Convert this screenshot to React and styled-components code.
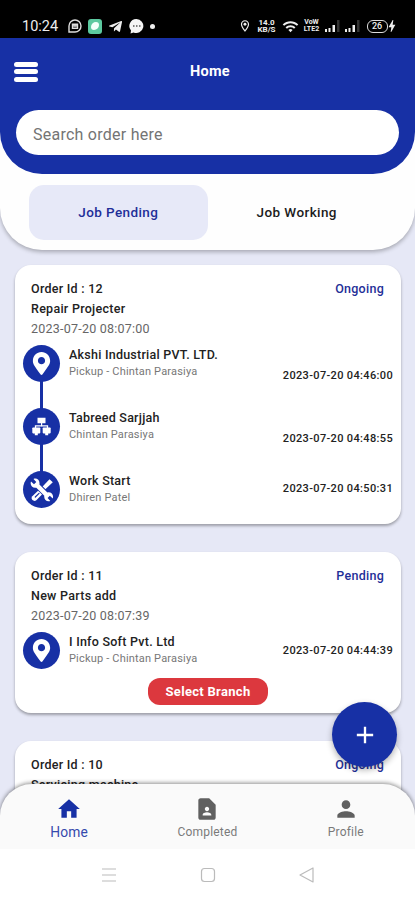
import styled, { createGlobalStyle } from 'styled-components'
import {
 MdHome,
 MdPerson,
 MdAdd,
 MdContactPage,
 MdBolt,
 MdWifi,
 MdOutlineLocationOn,
} from 'react-icons/md'
import { FaMapMarkerAlt, FaTelegramPlane } from 'react-icons/fa'

const GlobalStyle = createGlobalStyle`
 * {
  box-sizing: border-box;
 }
 body {
  margin: 0;
  font-family: Roboto, 'Liberation Sans', sans-serif;
  background: #e6e8f6;
 }
`
const Screen = styled.div`
 height: 900px;
 display: flex;
 flex-direction: column;
 overflow: hidden;
 background: #e6e8f6;
`
const StatusBar = styled.div`
 height: 38px;
 flex-shrink: 0;
 padding: 14px 20px 0 22px;
 display: flex;
 justify-content: space-between;
 background: #000;
 color: #eee;
 svg {
  display: block;
  flex-shrink: 0;
 }
`
const StatusGroup = styled.div`
 height: 24px;
 display: flex;
 align-items: center;
 gap: ${({ $gap }) => $gap}px;
`
const Clock = styled.span`
 width: 37px;
 margin-right: 3px;
 font-size: 14.5px;
 white-space: nowrap;
`
const GreenApp = styled.span`
 width: 14px;
 height: 15px;
 padding: 3px;
 border-radius: 3px;
 background: #5cc9a0;
 &::before {
  content: '';
  display: block;
  width: 8px;
  height: 8px;
  border-radius: 5px 3px;
  background: #f2fffa;
 }
`
const Dot = styled.span`
 width: 5px;
 height: 5px;
 border-radius: 50%;
 background: #eee;
`
const Tiny = styled.span`
 width: ${({ $width }) => $width}px;
 display: flex;
 flex-direction: column;
 align-items: center;
 gap: 0.5px;
 font-size: ${({ $size }) => $size}px;
 font-weight: 700;
 line-height: 7px;
 white-space: nowrap;
 span {
  display: block;
  height: 7px;
 }
`
const Battery = styled.span`
 width: 21px;
 height: 13px;
 margin-left: 1px;
 border: 1.5px solid #ddd;
 border-radius: 6px;
 font-size: 9px;
 font-weight: 500;
 line-height: 11px;
 text-align: center;
`
const Bolt = styled(MdBolt)`
 margin: 0 -5px 0 -9px;
`
const Top = styled.div`
 flex-shrink: 0;
 border-radius: 0 0 42px 42px;
 background: #fefefe;
 box-shadow: 0 2px 4px rgba(0, 0, 0, 0.28);
`
const Header = styled.header`
 height: 136px;
 padding: 0 16px;
 border-radius: 0 0 42px 42px;
 background: #1730a5;
`
const TitleRow = styled.div`
 height: 72px;
 display: grid;
 grid-template-columns: 60px 1fr 56px;
 align-items: center;
 margin-left: -2px;
 color: #fff;
`
const Burger = styled.div`
 width: 24px;
 display: flex;
 flex-direction: column;
 gap: 2.5px;
 margin-top: -5px;
`
const BurgerLine = styled.span`
 height: 5px;
 border-radius: 2.5px;
 background: #fff;
`
const Title = styled.h1`
 margin: -6px 0 0;
 padding-left: 3px;
 font-size: 14.5px;
 font-weight: 700;
 text-align: center;
 letter-spacing: 0.25px;
`
const Search = styled.input`
 display: block;
 width: 100%;
 height: 45px;
 padding: 3px 17px 0;
 border: 0;
 border-radius: 23px;
 outline: 0;
 background: #fff;
 font-family: inherit;
 font-size: 16px;
 letter-spacing: 0.25px;
 &::placeholder {
  color: #747474;
  opacity: 1;
 }
`
const Tabs = styled.div`
 height: 76px;
 padding: 11px 29px 10px;
 display: flex;
`
const Tab = styled.div`
 flex: 1;
 border-radius: 15px;
 background: ${({ $active }) => ($active ? '#e7e9f8' : 'transparent')};
 color: ${({ $active }) => ($active ? '#1f2f98' : '#1c1c1c')};
 font-size: 13.5px;
 font-weight: 500;
 letter-spacing: 0.4px;
 line-height: 54px;
 text-align: center;
`
const List = styled.main`
 flex: 1;
 min-height: 0;
 overflow: hidden;
 margin-bottom: -36px;
 padding: 15px 14px 0 15px;
 display: flex;
 flex-direction: column;
 gap: 28px;
`
const Card = styled.article`
 height: ${({ $height }) => $height}px;
 flex-shrink: 0;
 padding: 14px 8px 0 8px;
 border-radius: 16px;
 background: #fff;
 box-shadow: 0 2px 3px rgba(0, 0, 0, 0.32);
`
const CardHead = styled.div`
 display: flex;
 justify-content: space-between;
 padding: 0 9px 0 8px;
`
const Strong = styled.div`
 color: ${({ $blue }) => ($blue ? '#1f2f98' : '#222')};
 font-size: 12.5px;
 font-weight: 500;
 line-height: 20px;
 letter-spacing: 0.27px;
 white-space: nowrap;
`
const Created = styled.div`
 color: #666;
 font-size: 12.5px;
 line-height: 20px;
 letter-spacing: 0.23px;
`
const Steps = styled.div`
 display: flex;
 flex-direction: column;
 gap: 26px;
 margin-top: 6px;
`
const Step = styled.div`
 height: 37px;
 display: grid;
 grid-template-columns: 37px 1fr auto;
 column-gap: 9px;
`
const StepIcon = styled.div`
 position: relative;
 width: 37px;
 height: 37px;
 display: flex;
 align-items: center;
 justify-content: center;
 border-radius: 50%;
 background: #1730a5;
 color: #fff;
 &::after {
  content: '';
  display: ${({ $linked }) => ($linked ? 'block' : 'none')};
  position: absolute;
  top: 36px;
  left: 17px;
  width: 3px;
  height: 28px;
  background: #1730a5;
 }
`
const StepText = styled.div`
 padding-top: 1px;
`
const StepName = styled.div`
 color: #222;
 font-size: 12.5px;
 font-weight: 500;
 line-height: 18px;
 letter-spacing: 0.24px;
 white-space: nowrap;
`
const StepPerson = styled.div`
 color: #777;
 font-size: 11px;
 line-height: 15px;
 letter-spacing: 0.18px;
`
const StepTime = styled.div`
 padding-top: ${({ $offset }) => $offset}px;
 color: #222;
 font-size: 11px;
 font-weight: 500;
 line-height: 14px;
 letter-spacing: 0.35px;
`
const BranchButton = styled.button`
 display: block;
 width: 120px;
 height: 27px;
 margin: 9px auto 0;
 padding: 0;
 border: 0;
 border-radius: 12px;
 background: #dc383e;
 color: #fff;
 font-family: inherit;
 font-size: 13px;
 font-weight: 700;
 letter-spacing: 0.3px;
`
const Fab = styled.button`
 position: absolute;
 top: 702px;
 left: 332px;
 width: 65px;
 height: 65px;
 display: flex;
 align-items: center;
 justify-content: center;
 padding: 0;
 border: 0;
 border-radius: 50%;
 background: #1730a5;
 color: #fff;
 box-shadow: 0 3px 6px rgba(0, 0, 0, 0.3);
`
const BottomNav = styled.nav`
 position: relative;
 height: 65px;
 flex-shrink: 0;
 display: grid;
 grid-template-columns: repeat(3, 1fr);
 border-radius: 32px 32px 0 0;
 background: #fafafa;
 box-shadow: 0 -1px 4px rgba(0, 0, 0, 0.45);
`
const NavItem = styled.div`
 display: flex;
 flex-direction: column;
 align-items: center;
 padding-top: 12px;
 color: ${({ $active }) => ($active ? '#1730a5' : '#606060')};
 font-size: ${({ $active }) => ($active ? 13.8 : 12)}px;
 letter-spacing: 0.2px;
 line-height: 20px;
`
const NavLabel = styled.span`
 color: ${({ $active }) => ($active ? '#3549ad' : '#7a7a7a')};
`
const SystemNav = styled.div`
 position: relative;
 height: 51px;
 flex-shrink: 0;
 background: #fff;
 svg {
  display: block;
 }
`

function NetworkIcon({ size }) {
 return (
  <svg width={size} height={size} viewBox="0 0 19 19" fill="currentColor">
   <path d="M5.500 .8h8v5.500h-8zM9 6h1.200v3.300H9z" />
   <path d="M3.500 11V8.800h12V11" fill="none" stroke="currentColor" strokeWidth="1.3" />
   <rect x=".3" y="10.400" width="8" height="6" rx=".8" />
   <rect x="10.700" y="10.400" width="8" height="6" rx=".8" />
   <path d="M2.800 16h3v2.300h-3zM13.200 16h3v2.300h-3z" />
  </svg>
 )
}

function ToolsIcon({ size }) {
 return (
  <svg width={size} height={size} viewBox="0 0 24 24" fill="currentColor">
   <path d="M13.800 7.200 19.500 1.200l3.300 3.100-6.100 5.600-2.600 2.500-2.600-2.600z" />
   <path d="M8.600 12.200 12.500 16l-6.200 6.300c-2.600 2.100-6.300-1.300-4-4z" />
   <path d="m5.300 19 3.700-3.600" stroke="#1730a5" strokeWidth="1.200" strokeLinecap="round" />
   <g stroke="#1730a5" strokeWidth="1.800" strokeLinejoin="round" paintOrder="stroke">
    <path d="M3.500 .9 6.300 3.900 4 6.200 1 3.400C-.4 7 2.400 10.400 6.300 9.700l8 8c-.7 4 2.600 6.500 6 5.300l-2.700-3 2.200-2.300 3 2.700c1.200-3.700-1.600-6.700-5.400-6L9.400 6.400C10.200 2.400 7 -.4 3.500 .9z" />
   </g>
  </svg>
 )
}

const orders = [
 {
  id: 12,
  title: 'Repair Projecter',
  created: '2023-07-20 08:07:00',
  status: 'Ongoing',
  height: 259,
  steps: [
   { icon: FaMapMarkerAlt, size: 23, name: 'Akshi Industrial PVT. LTD.', person: 'Pickup - Chintan Parasiya', time: '2023-07-20 04:46:00', offset: 24 },
   { icon: NetworkIcon, size: 19, name: 'Tabreed Sarjjah', person: 'Chintan Parasiya', time: '2023-07-20 04:48:55', offset: 24 },
   { icon: ToolsIcon, size: 24, name: 'Work Start', person: 'Dhiren Patel', time: '2023-07-20 04:50:31', offset: 11 },
  ],
 },
 {
  id: 11,
  title: 'New Parts add',
  created: '2023-07-20 08:07:39',
  status: 'Pending',
  height: 161,
  action: 'Select Branch',
  steps: [
   { icon: FaMapMarkerAlt, size: 23, name: 'I Info Soft Pvt. Ltd', person: 'Pickup - Chintan Parasiya', time: '2023-07-20 04:44:39', offset: 12 },
  ],
 },
 { id: 10, title: 'Servicing machine', created: '2023-07-20 08:08:12', status: 'Ongoing', height: 160, steps: [] },
]

function Signal() {
 return (
  <svg width="15" height="12" viewBox="0 0 15 12" fill="#eee">
   <path d="M0 9h2v3H0zM3.500 8h2v4h-2zM7.500 5h2.500v7H7.500z" />
   <path d="M12 0h2.500v12H12z" fill="#333" />
  </svg>
 )
}

function Status() {
 return (
  <StatusBar>
   <StatusGroup $gap={6}>
    <Clock>10:24</Clock>
    <svg width="14" height="14" viewBox="0 0 14 14" fill="none" stroke="#ddd" strokeWidth="1.4">
     <path d="M1 13V7a6 6 0 1 1 6 6z" />
     <path d="M4.500 5.200h5v4h-5zM6 5v2h2V5" />
    </svg>
    <GreenApp />
    <FaTelegramPlane size={15} />
    <svg width="15" height="15" viewBox="0 0 15 15">
     <path d="M7.500 0a7 7 0 1 1-3 13.400L1.500 14.500 2 11.500A7 7 0 0 1 7.500 0z" fill="#f5f5f5" />
     <path d="M4 7h1.500M7 7h1.500M10 7h1.500" stroke="#555" strokeWidth="1.3" />
    </svg>
    <Dot />
   </StatusGroup>
   <StatusGroup $gap={5.5}>
    <MdOutlineLocationOn size={14} />
    <Tiny $width={19} $size={8}>
     <span>14.0</span>
     <span>KB/S</span>
    </Tiny>
    <MdWifi size={17} />
    <Tiny $width={15} $size={7}>
     <span>VoW</span>
     <span>LTE2</span>
    </Tiny>
    <Signal />
    <Signal />
    <Battery>26</Battery>
    <Bolt size={16} />
   </StatusGroup>
  </StatusBar>
 )
}

function Order({ order }) {
 return (
  <Card $height={order.height}>
   <CardHead>
    <div>
     <Strong>Order Id : {order.id}</Strong>
     <Strong>{order.title}</Strong>
     <Created>{order.created}</Created>
    </div>
    <Strong $blue>{order.status}</Strong>
   </CardHead>
   <Steps>
    {order.steps.map(({ icon: Icon, size, name, person, time, offset }, index) => (
     <Step key={name}>
      <StepIcon $linked={index < order.steps.length - 1}>
       <Icon size={size} />
      </StepIcon>
      <StepText>
       <StepName>{name}</StepName>
       <StepPerson>{person}</StepPerson>
      </StepText>
      <StepTime $offset={offset}>{time}</StepTime>
     </Step>
    ))}
   </Steps>
   {order.action && <BranchButton>{order.action}</BranchButton>}
  </Card>
 )
}

function App() {
 return (
  <Screen>
   <GlobalStyle />
   <Status />
   <Top>
    <Header>
     <TitleRow>
      <Burger>
       <BurgerLine />
       <BurgerLine />
       <BurgerLine />
      </Burger>
      <Title>Home</Title>
     </TitleRow>
     <Search placeholder="Search order here" />
    </Header>
    <Tabs>
     <Tab $active>Job Pending</Tab>
     <Tab>Job Working</Tab>
    </Tabs>
   </Top>
   <List>
    {orders.map((order) => (
     <Order key={order.id} order={order} />
    ))}
   </List>
   <Fab>
    <MdAdd size={28} />
   </Fab>
   <BottomNav>
    <NavItem $active>
     <MdHome size={26} />
     <NavLabel $active>Home</NavLabel>
    </NavItem>
    <NavItem>
     <MdContactPage size={26} />
     <NavLabel>Completed</NavLabel>
    </NavItem>
    <NavItem>
     <MdPerson size={26} />
     <NavLabel>Profile</NavLabel>
    </NavItem>
   </BottomNav>
   <SystemNav>
    <svg width="415" height="51" viewBox="0 0 415 51" fill="none" stroke="#bbb" strokeWidth="1.2">
     <path d="M102 20h14M102 26h14M102 32h14" />
     <rect x="201.500" y="19.500" width="13" height="13" rx="3" />
     <path d="M313 19v14l-13-7z" strokeLinejoin="round" />
    </svg>
   </SystemNav>
  </Screen>
 )
}

export default App
